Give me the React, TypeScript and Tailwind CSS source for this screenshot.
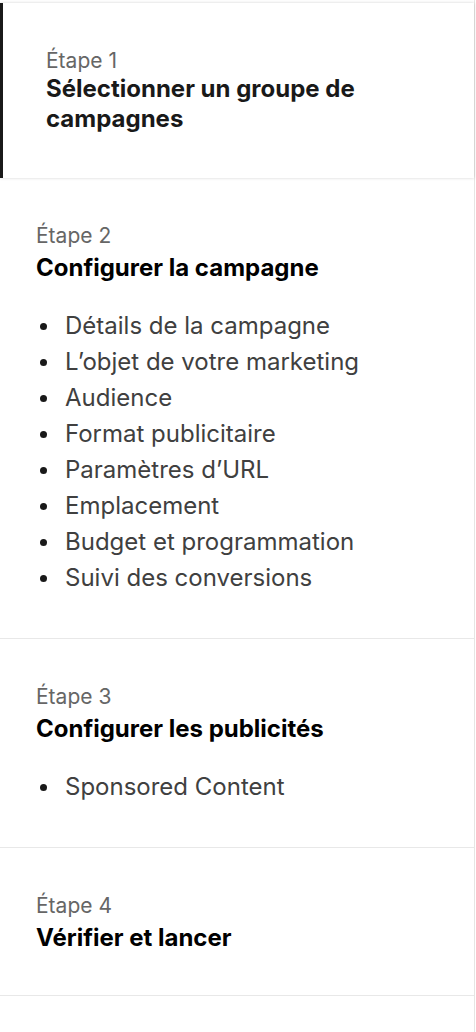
const steps = [
    {
        label: "Étape 2",
        title: "Configurer la campagne",
        items: [
            "Détails de la campagne",
            "L’objet de votre marketing",
            "Audience",
            "Format publicitaire",
            "Paramètres d’URL",
            "Emplacement",
            "Budget et programmation",
            "Suivi des conversions",
        ],
    },
    { label: "Étape 3", title: "Configurer les publicités", items: ["Sponsored Content"] },
    { label: "Étape 4", title: "Vérifier et lancer", items: [] as string[] },
];

export default function App() {
    return (
        <div className="Stepper min-h-[1032px] w-[475px] bg-white pt-[3px] border-r border-[#e6e5e3] font-['Inter','Liberation_Sans',sans-serif]">
            <div className="Step_Active relative z-10 border-l-[3px] border-[#191919] bg-white pl-[43px] pr-8 pt-[46px] pb-[44px] shadow-[0_0_3px_rgba(0,0,0,0.18)]">
                <p className="text-[21px] leading-6 text-[#666666]">Étape 1</p>
                <h2 className="mt-[1px] text-[24px] leading-[30px] font-bold text-[#191919]">
                    Sélectionner un groupe de campagnes
                </h2>
            </div>
            {steps.map((step) => (
                <div key={step.label} className="Step border-b border-[#e8e8e8] pl-9 pr-8 pt-[46px] pb-[42px]">
                    <p className="text-[21px] leading-6 text-[#666666]">{step.label}</p>
                    <h2 className="mt-[5px] text-[24px] leading-[30px] font-bold text-[#000000]">{step.title}</h2>
                    {step.items.length > 0 && (
                        <ul className="mt-[25px] flex flex-col">
                            {step.items.map((item) => (
                                <li key={item} className="flex items-center h-9 text-[24px] text-[#404040]">
                                    <span className="ml-[4px] mr-[18px] h-[7px] w-[7px] rounded-full bg-[#191919]" />
                                    {item}
                                </li>
                            ))}
                        </ul>
                    )}
                </div>
            ))}
        </div>
    );
}
